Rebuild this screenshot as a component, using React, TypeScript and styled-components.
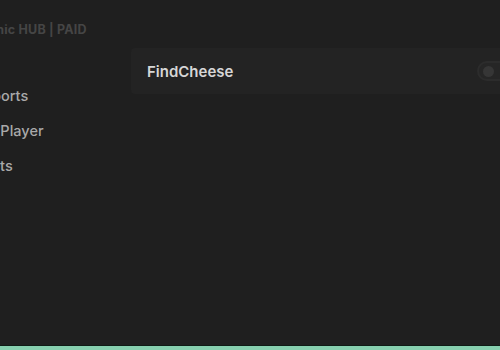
import React from 'react'
import styled, { createGlobalStyle } from 'styled-components'

const GlobalStyle = createGlobalStyle`
  html, body {
    margin: 0;
    padding: 0;
    background: #1f1f1f;
    overflow: hidden;
  }
  body {
    font-family: Inter, "Open Sans", sans-serif;
  }
`

// the hub window sits partly off the left edge of the screen
const Window = styled.div`
  display: flex;
  flex-direction: column;
  width: 550px;
  height: 350px;
  margin-left: -50px;
  background: #1f1f1f;
  box-sizing: border-box;
`

const Body = styled.div`
  display: grid;
  grid-template-columns: 181px 1fr;
  flex: 1;
`

const Sidebar = styled.aside`
  display: flex;
  flex-direction: column;
`

const Title = styled.div`
  height: 60px;
  line-height: 60px;
  padding-left: 30px;
  font-size: 12.5px;
  font-weight: 700;
  letter-spacing: 0.2px;
  color: #454545;
`

const NavList = styled.nav`
  display: flex;
  flex-direction: column;
  gap: 9px;
  padding-top: 23px;
`

const NavItem = styled.div`
  height: 26px;
  line-height: 26px;
  padding-left: 13px;
  font-size: 14.5px;
  font-weight: 500;
  color: #a9a9a9;
`

const Content = styled.main`
  display: flex;
  flex-direction: column;
  padding-top: 48px;
`

const Card = styled.div`
  display: flex;
  align-items: center;
  justify-content: space-between;
  height: 46px;
  padding: 0 0 0 16px;
  background: #232323;
  border-radius: 4px 0 0 4px;
`

const CardLabel = styled.span`
  font-size: 15px;
  font-weight: 600;
  color: #d6d6d6;
`

const Toggle = styled.div<{ $on?: boolean }>`
  display: flex;
  align-items: center;
  width: 40px;
  height: 20px;
  margin-right: -17px;
  padding: 0 4px;
  box-sizing: border-box;
  border: 2px solid #2c2c2c;
  border-radius: 10px;
  background: #262626;
`

const Knob = styled.span`
  width: 11px;
  height: 11px;
  border-radius: 50%;
  background: #363636;
`

const BottomBar = styled.div`
  height: 4px;
  border-top: 1px solid #0e1b15;
  background: #86cfae;
`

export default function App() {
  return (
    <>
      <GlobalStyle />
      <Window>
        <Body>
          <Sidebar>
            <Title>Sonic HUB | PAID</Title>
            <NavList>
              <NavItem>Teleports</NavItem>
              <NavItem>LocalPlayer</NavItem>
              <NavItem>Credits</NavItem>
            </NavList>
          </Sidebar>
          <Content>
            <Card>
              <CardLabel>FindCheese</CardLabel>
              <Toggle>
                <Knob />
              </Toggle>
            </Card>
          </Content>
        </Body>
        <BottomBar />
      </Window>
    </>
  )
}
